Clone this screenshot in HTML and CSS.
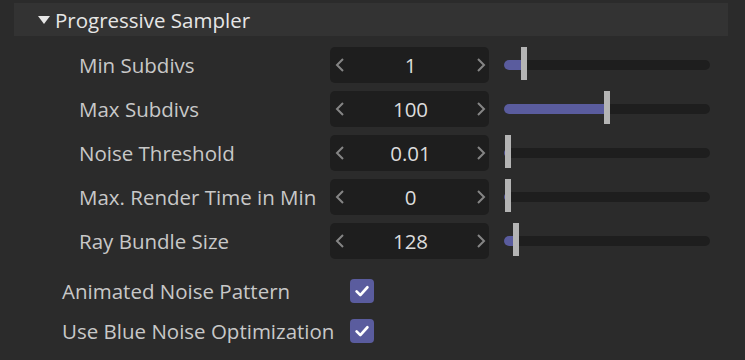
FILE: index.html
```html
<!DOCTYPE html>
<html lang="en">
  <head>
    <meta charset="UTF-8" />
    <meta name="viewport" content="width=device-width, initial-scale=1.0" />
    <title>Progressive Sampler</title>
    <link rel="stylesheet" href="styles.css">
  </head>
  <body>
    <div class="panel">
      <div class="group-header">
        <span class="caret"></span>
        <span class="group-title">Progressive Sampler</span>
      </div>

      <div class="params">
        <div class="param">
          <span class="label">Min Subdivs</span>
          <div class="spinner">
            <svg class="chev" viewBox="0 0 10 16"><path d="M8 2 L2 8 L8 14" /></svg>
            <span class="value">1</span>
            <svg class="chev" viewBox="0 0 10 16"><path d="M2 2 L8 8 L2 14" /></svg>
          </div>
          <div class="slider">
            <div class="track"><div class="fill" style="width: 17px"></div></div>
            <div class="handle" style="left: 17px"></div>
          </div>
        </div>

        <div class="param">
          <span class="label">Max Subdivs</span>
          <div class="spinner">
            <svg class="chev" viewBox="0 0 10 16"><path d="M8 2 L2 8 L8 14" /></svg>
            <span class="value">100</span>
            <svg class="chev" viewBox="0 0 10 16"><path d="M2 2 L8 8 L2 14" /></svg>
          </div>
          <div class="slider">
            <div class="track"><div class="fill" style="width: 101px"></div></div>
            <div class="handle" style="left: 100px"></div>
          </div>
        </div>

        <div class="param">
          <span class="label">Noise Threshold</span>
          <div class="spinner">
            <svg class="chev" viewBox="0 0 10 16"><path d="M8 2 L2 8 L8 14" /></svg>
            <span class="value">0.01</span>
            <svg class="chev" viewBox="0 0 10 16"><path d="M2 2 L8 8 L2 14" /></svg>
          </div>
          <div class="slider">
            <div class="track"><div class="fill" style="width: 2px"></div></div>
            <div class="handle" style="left: 1px"></div>
          </div>
        </div>

        <div class="param">
          <span class="label">Max. Render Time in Min</span>
          <div class="spinner">
            <svg class="chev" viewBox="0 0 10 16"><path d="M8 2 L2 8 L8 14" /></svg>
            <span class="value">0</span>
            <svg class="chev" viewBox="0 0 10 16"><path d="M2 2 L8 8 L2 14" /></svg>
          </div>
          <div class="slider">
            <div class="track"><div class="fill" style="width: 2px"></div></div>
            <div class="handle" style="left: 1px"></div>
          </div>
        </div>

        <div class="param">
          <span class="label">Ray Bundle Size</span>
          <div class="spinner">
            <svg class="chev" viewBox="0 0 10 16"><path d="M8 2 L2 8 L8 14" /></svg>
            <span class="value">128</span>
            <svg class="chev" viewBox="0 0 10 16"><path d="M2 2 L8 8 L2 14" /></svg>
          </div>
          <div class="slider">
            <div class="track"><div class="fill" style="width: 10px"></div></div>
            <div class="handle" style="left: 9px"></div>
          </div>
        </div>
      </div>

      <div class="checks">
        <div class="check-row">
          <span class="label">Animated Noise Pattern</span>
          <span class="checkbox">
            <svg viewBox="0 0 24 24"><path d="M5.5 12.5 L10 17 L18.5 7.5" /></svg>
          </span>
        </div>
        <div class="check-row">
          <span class="label">Use Blue Noise Optimization</span>
          <span class="checkbox">
            <svg viewBox="0 0 24 24"><path d="M5.5 12.5 L10 17 L18.5 7.5" /></svg>
          </span>
        </div>
      </div>
    </div>
  </body>
</html>
```

FILE: styles.css
```css
body {
  margin: 0;
  padding: 0;
  background-color: #2b2b2b;
  font-family: "Open Sans", "Noto Sans", sans-serif;
  color: #c8c8c8;
}

.panel {
  padding: 3px 17px 0 14px;
}

.group-header {
  display: flex;
  align-items: center;
  height: 33px;
  background-color: #333333;
  padding-left: 24px;
}

.caret {
  width: 0;
  height: 0;
  border-left: 6px solid transparent;
  border-right: 6px solid transparent;
  border-top: 8px solid #e6e6e6;
  margin-right: 5px;
}

.group-title {
  font-size: 20.5px;
  line-height: 24px;
  color: #e6e6e6;
}

.params {
  display: grid;
  row-gap: 8px;
  margin-top: 11px;
  padding-left: 65px;
}

.param {
  display: grid;
  grid-template-columns: 251px 159px 221px;
  align-items: center;
  height: 36px;
}

.label {
  font-size: 20.5px;
  line-height: 24px;
  color: #c8c8c8;
  white-space: nowrap;
}

.spinner {
  display: flex;
  align-items: center;
  justify-content: space-between;
  height: 36px;
  background-color: #1e1e1e;
  border-radius: 5px;
  padding: 0 3px 0 5px;
}

.chev {
  width: 10px;
  height: 16px;
  fill: none;
  stroke: #858585;
  stroke-width: 2;
}

.value {
  font-size: 20.5px;
  line-height: 24px;
  color: #dcdcdc;
}

.slider {
  position: relative;
  height: 36px;
  margin-left: 15px;
  display: flex;
  align-items: center;
}

.track {
  width: 100%;
  height: 10px;
  border-radius: 5px;
  background-color: #1e1e1e;
  overflow: hidden;
}

.fill {
  height: 100%;
  background-color: #5a5c9e;
}

.handle {
  position: absolute;
  top: 0;
  width: 6px;
  height: 33px;
  background-color: #b4b4b4;
}

.checks {
  display: grid;
  row-gap: 16px;
  margin-top: 20px;
  padding-left: 48px;
}

.check-row {
  display: grid;
  grid-template-columns: 288px 24px;
  align-items: center;
  height: 24px;
}

.checkbox {
  width: 24px;
  height: 24px;
  border-radius: 4px;
  background-color: #5a5c9e;
  display: flex;
  align-items: center;
  justify-content: center;
}

.checkbox svg {
  width: 20px;
  height: 20px;
  fill: none;
  stroke: #ffffff;
  stroke-width: 3.2;
  stroke-linecap: round;
  stroke-linejoin: round;
}
```
